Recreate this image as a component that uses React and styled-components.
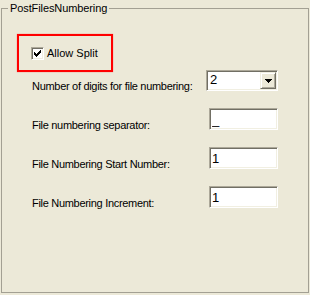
import React from "react";
import styled, { createGlobalStyle } from "styled-components";

const Global = createGlobalStyle`
  html, body { margin: 0; padding: 0; background: #ece9d8; }
  body {
    width: 310px; height: 295px; overflow: hidden;
    font-family: "Liberation Sans", Arial, sans-serif;
    font-size: 11px; color: #000;
  }
`;

const Group = styled.fieldset`
  box-sizing: border-box;
  margin: 2px 0 0 1px;
  width: 308px;
  height: 291px;
  border: 1px solid #a3a093;
  padding: 0;
  min-width: 0;
`;

const Legend = styled.legend`
  margin-left: 6px;
  padding: 0 2px;
  font-size: 11px;
  line-height: 13px;
  letter-spacing: -0.1px;
`;

const Body = styled.div`
  padding: 19px 30px 0 15px;
`;

const Highlight = styled.div`
  box-sizing: border-box;
  width: 96px;
  height: 38px;
  border: 2px solid #ff0000;
  box-shadow: 0 0 1px rgba(255, 0, 0, 0.55);
  display: flex;
  align-items: flex-start;
  gap: 3px;
  padding: 11px 0 0 12px;
`;

const Check = styled.span`
  box-sizing: border-box;
  width: 13px;
  height: 13px;
  flex: none;
  display: flex;
  align-items: center;
  justify-content: center;
  background: #fff;
  border: 1px solid;
  border-color: #aca899 #ffffff #ffffff #aca899;
  box-shadow: inset 1px 1px #716f64, inset -1px -1px #f1efe2;
`;

const CheckText = styled.span`
  line-height: 13px;
`;

const Form = styled.div`
  display: grid;
  grid-template-columns: 1fr auto;
  grid-template-rows: 21px 22px 22px 22px;
  row-gap: 17px;
  align-items: end;
  margin-top: -2px;
  padding-left: 15px;
`;

const Label = styled.span`
  line-height: 13px;
  margin-bottom: -2px;
  white-space: nowrap;
  letter-spacing: -0.3px;
`;

const sunken = `
  box-sizing: border-box;
  background: #fff;
  border: 1px solid;
  border-color: #aca899 #ffffff #ffffff #aca899;
  box-shadow: inset 1px 1px #716f64, inset -1px -1px #f1efe2;
`;

const Combo = styled.div`
  ${sunken}
  width: 72px;
  height: 21px;
  display: flex;
  padding: 1px;
`;

const ComboValue = styled.span`
  flex: 1;
  font-size: 13px;
  line-height: 15px;
  padding-left: 2px;
`;

const DropButton = styled.span`
  box-sizing: border-box;
  width: 16px;
  height: 17px;
  flex: none;
  display: flex;
  align-items: center;
  justify-content: center;
  background: #ece9d8;
  border: 1px solid;
  border-color: #f1efe2 #716f64 #716f64 #f1efe2;
  box-shadow: inset 1px 1px #ffffff, inset -1px -1px #aca899;
`;

const TextBox = styled.input`
  ${sunken}
  width: 69px;
  height: 22px;
  margin: 0;
  padding: 1px 2px 0 2px;
  font-family: "Liberation Sans", Arial, sans-serif;
  font-size: 13px;
  line-height: 15px;
  color: #000;
  outline: none;
  justify-self: end;
`;

const CheckMark = () => (
  <svg width="7" height="7" viewBox="0 0 7 7" shapeRendering="crispEdges">
    <path
      fill="#000"
      d="M6 0h1v1h-1z M5 1h2v1h-2z M0 2h1v1h-1z M4 2h3v1h-3z M0 3h2v1h-2z M3 3h3v1h-3z M0 4h5v1h-5z M1 5h3v1h-3z M2 6h1v1h-1z"
    />
  </svg>
);

const Arrow = () => (
  <svg width="7" height="4" viewBox="0 0 7 4" shapeRendering="crispEdges">
    <path fill="#000" d="M0 0h7v1h-7z M1 1h5v1h-5z M2 2h3v1h-3z M3 3h1v1h-1z" />
  </svg>
);

const fields = [
  { label: "File numbering separator:", value: "_" },
  { label: "File Numbering Start Number:", value: "1" },
  { label: "File Numbering Increment:", value: "1" },
];

export default function App() {
  return (
    <>
      <Global />
      <Group>
        <Legend>PostFilesNumbering</Legend>
        <Body>
          <Highlight>
            <Check role="checkbox" aria-checked="true">
              <CheckMark />
            </Check>
            <CheckText>Allow Split</CheckText>
          </Highlight>
          <Form>
            <Label>Number of digits for file numbering:</Label>
            <Combo>
              <ComboValue>2</ComboValue>
              <DropButton>
                <Arrow />
              </DropButton>
            </Combo>
            {fields.map((f) => (
              <React.Fragment key={f.label}>
                <Label>{f.label}</Label>
                <TextBox defaultValue={f.value} readOnly />
              </React.Fragment>
            ))}
          </Form>
        </Body>
      </Group>
    </>
  );
}
